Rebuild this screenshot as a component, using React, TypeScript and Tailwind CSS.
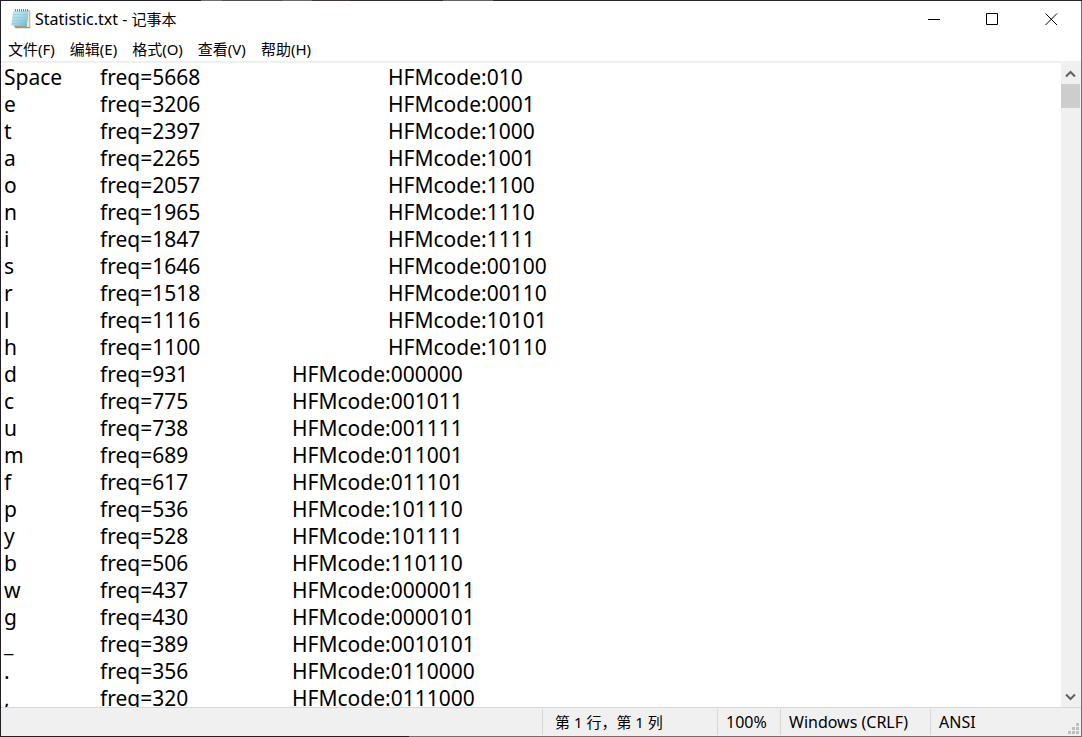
import React from "react";

const rows: [string, number, string][] = [
  ["Space", 5668, "010"],
  ["e", 3206, "0001"],
  ["t", 2397, "1000"],
  ["a", 2265, "1001"],
  ["o", 2057, "1100"],
  ["n", 1965, "1110"],
  ["i", 1847, "1111"],
  ["s", 1646, "00100"],
  ["r", 1518, "00110"],
  ["l", 1116, "10101"],
  ["h", 1100, "10110"],
  ["d", 931, "000000"],
  ["c", 775, "001011"],
  ["u", 738, "001111"],
  ["m", 689, "011001"],
  ["f", 617, "011101"],
  ["p", 536, "101110"],
  ["y", 528, "101111"],
  ["b", 506, "110110"],
  ["w", 437, "0000011"],
  ["g", 430, "0000101"],
  ["_", 389, "0010101"],
  [".", 356, "0110000"],
  [",", 320, "0111000"],
];

const text = rows
  .map(([symbol, freq, code]) => `${symbol}\tfreq=${freq}\t\tHFMcode:${code}`)
  .join("\n");

const menus = ["文件(F)", "编辑(E)", "格式(O)", "查看(V)", "帮助(H)"];

function NotepadIcon() {
  return (
    <svg width="20" height="20" viewBox="0 0 20 20" aria-hidden="true">
      <defs>
        <linearGradient id="sheet" x1="0" y1="0" x2="1" y2="1">
          <stop offset="0" stopColor="#cfecf4" />
          <stop offset="0.5" stopColor="#a3d8e6" />
          <stop offset="1" stopColor="#62b3cb" />
        </linearGradient>
      </defs>
      <path d="M17 1.500h2.200v17.700H4.500L3 17z" fill="#a8967a" />
      <path d="M17.200 2h1.300v16L15.500 18z" fill="#f0e6cc" />
      <path d="M2.200 1.500h15.500L15.600 17.500.2 16.500z" fill="url(#sheet)" />
      <path d="M2 5.500h15M1.700 8.500h15M1.300 11.500h15M1 14.500h15" stroke="#86c5d7" strokeWidth="0.500" />
      <path d="M4.500 0v2.500M6.500 0v2.500M8.500 0v2.500M10.500 0v2.500M12.500 0v2.500M14.500 0v2.500M16.500 0v2.500" stroke="#7d8688" strokeWidth="1" />
    </svg>
  );
}

export default function App() {
  return (
    <div className="flex h-screen flex-col bg-[linear-gradient(90deg,#221f26_409px,#707070_409px)] font-['Noto_Sans','Noto_Sans_CJK_SC',sans-serif] text-black">
      <div className="h-px shrink-0 bg-[linear-gradient(90deg,#221f26_201px,#6f6d6d_201px_222px,#4c4a5c_222px_282px,#6a6868_282px_312px,#45343c_312px_350px,#2d2b30_350px_443px,#666464_443px_493px,#2a282c_493px)]" />
      <div className="mx-px mb-px flex min-h-0 flex-1 flex-col bg-white">
        <header className="flex h-9 shrink-0 items-center">
          <div className="flex flex-1 items-center gap-1 pl-[10px]">
            <NotepadIcon />
            <h1 className="text-[16px] leading-5">
              Statistic.txt - <span className="text-[15px]">记事本</span>
            </h1>
          </div>
          <button aria-label="Minimize" className="flex h-9 w-[59px] items-center justify-center">
            <svg width="13" height="13" viewBox="0 0 13 13"><path d="M1 6.500h12" stroke="#000" /></svg>
          </button>
          <button aria-label="Maximize" className="flex h-9 w-[59px] items-center justify-center">
            <svg width="13" height="13" viewBox="0 0 13 13"><path d="M.5.5h11v11H.5z" fill="none" stroke="#000" /></svg>
          </button>
          <button aria-label="Close" className="flex h-9 w-[59px] items-center justify-center">
            <svg width="13" height="13" viewBox="0 0 13 13"><path d="m.5.5 11.500 11.500M12 .5.5 12" stroke="#000" /></svg>
          </button>
        </header>
        <nav className="flex h-[26px] shrink-0 items-end gap-[15px] border-b-2 border-[#f0f0f0] pb-px pl-[7px] text-[15px] leading-[22px]">
          {menus.map((m) => (
            <button key={m}>{m}</button>
          ))}
        </nav>
        <main className="flex min-h-0 flex-1">
          <textarea
            aria-label="Statistic.txt"
            defaultValue={text}
            wrap="off"
            spellCheck={false}
            className="min-w-0 flex-1 resize-none overflow-hidden pt-px pl-[3px] text-[21px] leading-[27px] outline-none [tab-size:96px]"
          />
          <div className="flex w-5 shrink-0 flex-col bg-[#f0f0f0] pr-px">
            <button aria-label="Scroll up" className="flex h-[21px] shrink-0 items-center justify-center">
              <svg width="11" height="8" viewBox="0 0 11 8"><path d="M1 6.500 5.500 2 10 6.500" fill="none" stroke="#606060" strokeWidth="2" /></svg>
            </button>
            <div className="h-6 bg-[#cdcdcd]" />
            <div className="flex-1" />
            <button aria-label="Scroll down" className="flex h-[21px] shrink-0 items-center justify-center">
              <svg width="11" height="8" viewBox="0 0 11 8"><path d="M1 1.500 5.500 6 10 1.500" fill="none" stroke="#606060" strokeWidth="2" /></svg>
            </button>
          </div>
        </main>
        <footer className="flex h-[29px] shrink-0 border-t border-[#d7d7d7] bg-[#f0f0f0] py-px text-[16px] leading-[26px]">
          <div className="flex-1" />
          <div className="w-[175px] border-l border-[#d7d7d7] pl-3 text-[15px]">第 1 行，第 1 列</div>
          <div className="w-[63px] border-l border-[#d7d7d7] pl-2">100%</div>
          <div className="w-[150px] border-l border-[#d7d7d7] pl-2">Windows (CRLF)</div>
          <div className="flex w-[151px] items-end justify-between border-l border-[#d7d7d7] pl-2">
            <span>ANSI</span>
            <svg width="13" height="12" viewBox="0 0 13 12" aria-hidden="true">
              <path d="M8 0h3v3H8zM4 4h3v3H4zM8 4h3v3H8zM0 8h3v3H0zM4 8h3v3H4zM8 8h3v3H8z" fill="#bfbfbf" />
            </svg>
          </div>
        </footer>
      </div>
    </div>
  );
}
